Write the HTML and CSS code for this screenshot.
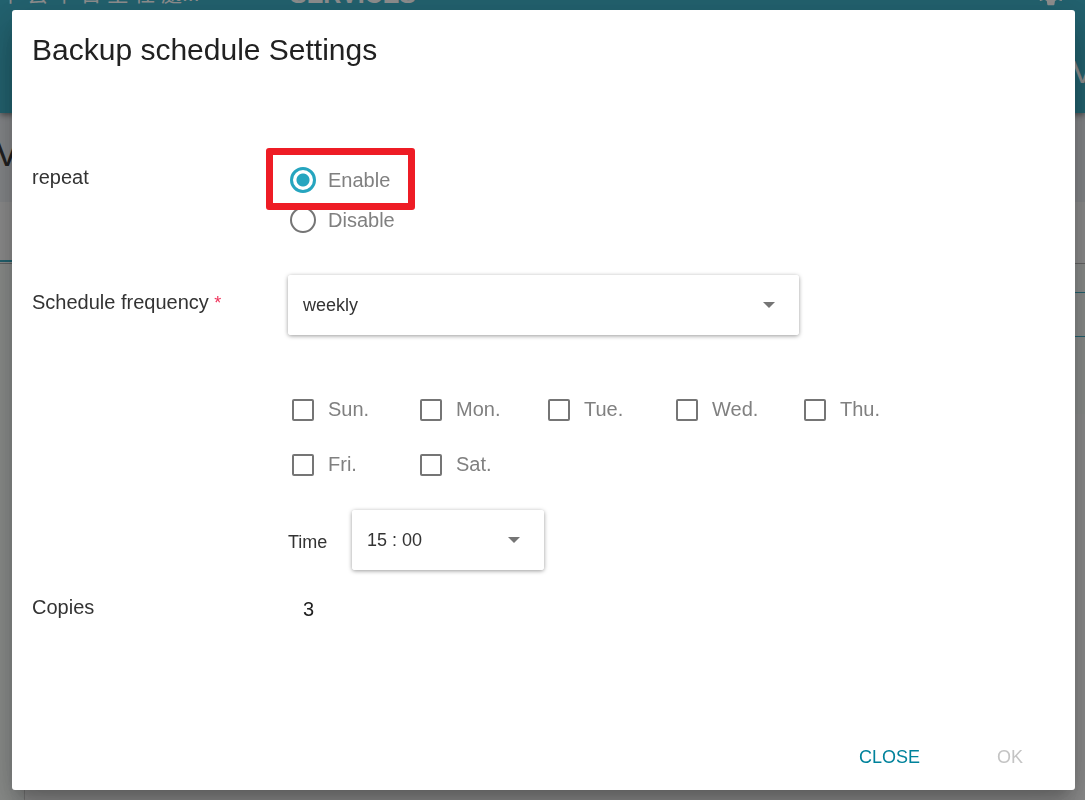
FILE: index.html
```html
<!DOCTYPE html>
<html lang="en">
<head>
  <meta charset="UTF-8" />
  <meta name="viewport" content="width=device-width, initial-scale=1.0" />
  <title>Backup schedule Settings</title>
  <link rel="stylesheet" href="styles.css">
</head>
<body>

  <div class="page" aria-hidden="true">
    <header class="topbar">
      <div class="topbar-row">
        <span class="site-name">中 芸 中 日 主 任 處...</span>
        <span class="site-section">SERVICES</span>
        <svg class="gear" viewBox="0 0 24 24"><path d="M19.4 13c.1-.3.1-.7.1-1s0-.7-.1-1l2.100-1.700c.2-.1.2-.4.1-.6l-2-3.500c-.1-.2-.4-.3-.6-.2l-2.500 1c-.5-.4-1.100-.7-1.700-1l-.4-2.600c0-.3-.2-.4-.5-.4h-4c-.3 0-.4.1-.5.4L9 5c-.6.300-1.200.600-1.700 1l-2.500-1c-.2-.1-.5 0-.6.2l-2 3.500c-.1.200-.1.500.1.600L4.500 11c0 .3-.1.700-.1 1s0 .7.1 1l-2.200 1.700c-.2.100-.2.400-.1.600l2 3.500c.1.200.4.300.6.200l2.500-1c.5.4 1.100.7 1.700 1l.4 2.600c0 .300.2.400.5.400h4c.3 0 .4-.1.500-.4l.4-2.600c.6-.3 1.200-.6 1.700-1l2.500 1c.2.100.5 0 .6-.2l2-3.500c.1-.2.100-.5-.1-.6zM12 15.500a3.500 3.500 0 1 1 0-7 3.500 3.500 0 0 1 0 7z"/></svg>
      </div>
      <div class="topbar-sub">V</div>
    </header>
    <div class="page-title">V</div>
    <div class="page-tabs"><div class="tab-active"></div></div>
    <div class="page-toolbar"></div>
    <div class="page-filter"></div>
    <div class="page-space"></div>
    <div class="page-panel"></div>
  </div>

  <div class="overlay">
    <form class="dialog" role="dialog" aria-labelledby="dialog-title">
      <h1 id="dialog-title">Backup schedule Settings</h1>

      <div class="row row-repeat">
        <div class="label" id="repeat-label">repeat</div>
        <div class="radios" role="radiogroup" aria-labelledby="repeat-label">
          <label class="option"><input type="radio" name="repeat" value="1" checked>Enable</label>
          <label class="option"><input type="radio" name="repeat" value="0">Disable</label>
          <div class="highlight"></div>
        </div>
      </div>

      <div class="row row-frequency">
        <label class="label" for="frequency">Schedule frequency <span class="required">*</span></label>
        <div class="select-box select-wide">
          <select id="frequency">
            <option>daily</option>
            <option selected>weekly</option>
            <option>monthly</option>
          </select>
        </div>
      </div>

      <div class="row">
        <div class="schedule">
          <div class="days">
            <label class="option"><input type="checkbox" name="day" value="0">Sun.</label>
            <label class="option"><input type="checkbox" name="day" value="1">Mon.</label>
            <label class="option"><input type="checkbox" name="day" value="2">Tue.</label>
            <label class="option"><input type="checkbox" name="day" value="3">Wed.</label>
            <label class="option"><input type="checkbox" name="day" value="4">Thu.</label>
            <label class="option"><input type="checkbox" name="day" value="5">Fri.</label>
            <label class="option"><input type="checkbox" name="day" value="6">Sat.</label>
          </div>
          <div class="time">
            <label for="time">Time</label>
            <div class="select-box select-time">
              <select id="time">
                <option>14 : 00</option>
                <option selected>15 : 00</option>
                <option>16 : 00</option>
              </select>
            </div>
          </div>
        </div>
      </div>

      <div class="row row-copies">
        <div class="label">Copies</div>
        <div class="copies">3</div>
      </div>

      <div class="actions">
        <button type="button" class="btn">CLOSE</button>
        <button type="submit" class="btn" disabled>OK</button>
      </div>
    </form>
  </div>

</body>
</html>
```

FILE: styles.css
```css
* {
  box-sizing: border-box;
}
body {
  margin: 0;
  font-family: "Liberation Sans", Arial, "Noto Sans CJK TC", sans-serif;
  font-size: 20px;
  color: #333;
  overflow: hidden;
}

/* page behind the dialog */
.page {
  display: flex;
  flex-direction: column;
  height: 100vh;
  background: #f6faf7;
}
.topbar {
  position: relative;
  height: 113px;
  flex: none;
  background: #26a5bf;
  color: white;
  box-shadow: 0 2px 6px rgba(0,0,0,0.5);
  overflow: hidden;
}
.topbar-row {
  display: flex;
  align-items: flex-end;
  height: 8px;
  line-height: 28px;
  white-space: nowrap;
}
.site-name {
  width: 290px;
  font-size: 21px;
}
.site-section {
  font-weight: bold;
  font-size: 25px;
}
.gear {
  width: 34px;
  height: 34px;
  fill: white;
  margin-left: auto;
  margin-right: 17px;
}
.topbar-sub {
  margin-top: 46px;
  margin-right: -8px;
  font-size: 32px;
  line-height: 36px;
  text-align: right;
}
.page-title {
  height: 89px;
  flex: none;
  background: #ebeff4;
  font-size: 36px;
  line-height: 82px;
  text-indent: -5px;
  color: #222;
}
.page-tabs {
  height: 61px;
  flex: none;
  background: #fafafa;
  padding-top: 58px;
}
.tab-active {
  width: 200px;
  height: 2px;
  background: #26a5bf;
}
.page-toolbar {
  height: 29px;
  flex: none;
  border-top: 1px solid #aaa;
}
.page-filter {
  height: 45px;
  flex: none;
  border: solid #26a5bf;
  border-width: 1px 0;
  margin-left: 24px;
}
.page-space {
  height: 77px;
  flex: none;
}
.page-panel {
  flex: 1;
  margin-left: 24px;
  background: #fafafa;
  border-left: 1px solid #ccc;
}

/* dialog */
.overlay {
  position: fixed;
  inset: 0;
  display: flex;
  padding: 10px 10px 10px 12px;
  background: rgba(33,33,33,0.5);
}
.dialog {
  flex: 1;
  display: flex;
  flex-direction: column;
  padding: 20px;
  background: white;
  border-radius: 3px;
  box-shadow: 0 11px 15px -7px rgba(0,0,0,0.2), 0 24px 38px 3px rgba(0,0,0,0.14), 0 9px 46px 8px rgba(0,0,0,0.12);
}
h1 {
  margin: 0;
  font-size: 30px;
  font-weight: normal;
  line-height: 40px;
  color: #212121;
}
.row {
  display: grid;
  grid-template-columns: 256px 1fr;
}
.label {
  line-height: 24px;
}
.row-repeat {
  margin-top: 90px;
}
.row-repeat .label {
  padding-top: 5px;
}
.row-frequency {
  margin-top: 35px;
}
.row-frequency .label {
  padding-top: 15px;
}
.required {
  font-size: 18px;
  color: #f0325a;
}
.option {
  display: flex;
  align-items: center;
  gap: 12px;
  height: 40px;
  padding-left: 2px;
  color: #808080;
}
.option input {
  appearance: none;
  margin: 0;
  width: 26px;
  height: 26px;
  background: white;
}
.option input[type="radio"] {
  border: 2px solid #757575;
  border-radius: 50%;
}
.option input[type="radio"]:checked {
  border: 3px solid #26a5bf;
  background: radial-gradient(circle, #26a5bf 6px, white 7px);
}
.option input[type="checkbox"] {
  width: 22px;
  height: 22px;
  margin: 2px;
  border: 2px solid #757575;
  border-radius: 2px;
}
.radios {
  position: relative;
}
.highlight {
  position: absolute;
  top: -12px;
  left: -22px;
  width: 149px;
  height: 62px;
  border: 7px solid #ee1c25;
  border-radius: 3px;
  pointer-events: none;
}
.select-box {
  position: relative;
  height: 60px;
  border-radius: 3px;
  box-shadow: 0 1px 4px rgba(0,0,0,0.4);
}
.select-box::after {
  content: "";
  position: absolute;
  top: 27px;
  right: 24px;
  border: 6px solid transparent;
  border-top-color: #757575;
  border-bottom: 0;
  pointer-events: none;
}
.select-box select {
  appearance: none;
  width: 100%;
  height: 100%;
  padding: 0 15px;
  border: 0;
  border-radius: 3px;
  background: white;
  font: inherit;
  font-size: 18px;
  color: #333;
}
.select-wide {
  width: calc(100% * 2 / 3);
}
.schedule {
  grid-column: 2;
  padding-top: 47px;
}
.days {
  display: grid;
  grid-template-columns: repeat(5, 128px);
}
.days .option {
  height: 55px;
}
.time {
  display: flex;
  align-items: center;
  margin-top: 18px;
  font-size: 18px;
}
.time label {
  width: 64px;
  padding-top: 5px;
}
.select-time {
  width: 192px;
}
.row-copies {
  margin-top: 25px;
}
.copies {
  padding: 2px 15px;
  line-height: 24px;
  color: #212121;
}
.actions {
  display: flex;
  justify-content: flex-end;
  gap: 37px;
  margin-top: auto;
  margin-right: 12px;
}
.btn {
  min-width: 66px;
  height: 26px;
  padding: 0 20px;
  border: 0;
  background: none;
  font: inherit;
  font-size: 18px;
  color: #00829b;
}
.btn:disabled {
  color: #c4c4c4;
}
```
